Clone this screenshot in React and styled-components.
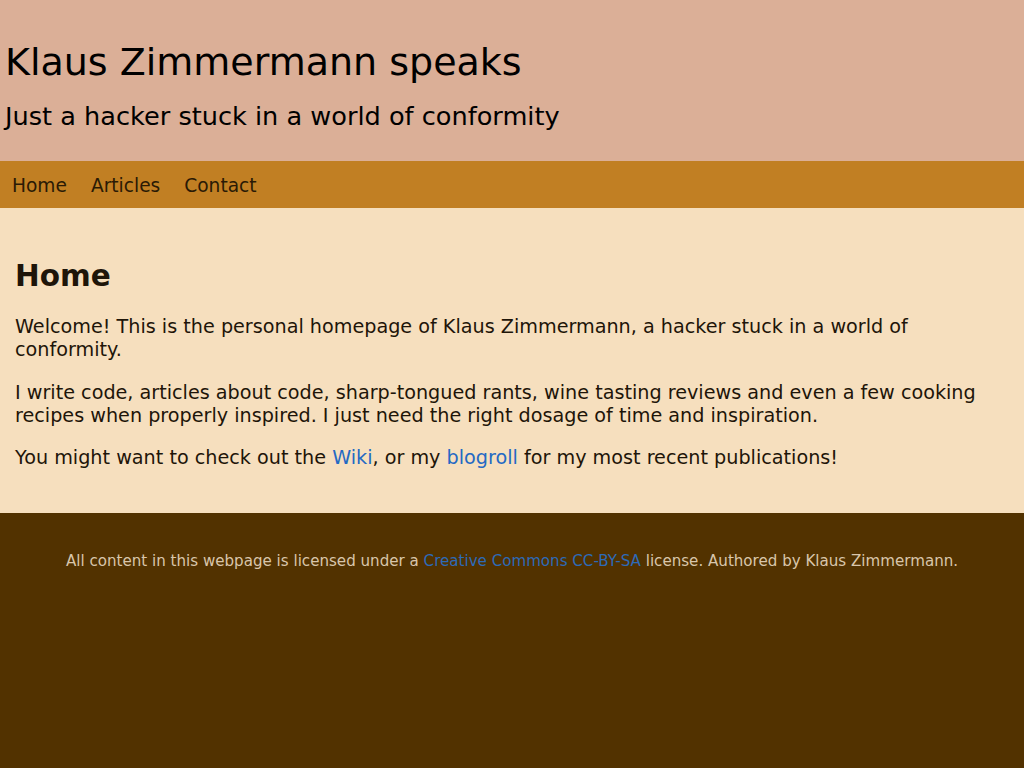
import React from "react";
import styled, { createGlobalStyle } from "styled-components";

const GlobalStyle = createGlobalStyle`
  html, body {
    margin: 0;
    padding: 0;
    background: #523200;
    font-family: "DejaVu Sans", Verdana, sans-serif;
  }
`;

const Header = styled.header`
  background: #dbaf97;
  padding: 40px 5px 30px;
  color: #000;
`;

const Title = styled.h1`
  margin: 0;
  font-size: 38px;
  line-height: 45px;
  font-weight: normal;
`;

const Subtitle = styled.p`
  margin: 16px 0 0;
  font-size: 25.6px;
  line-height: 30px;
`;

const Nav = styled.nav`
  background: #c17f23;
  height: 47px;
  box-sizing: border-box;
  padding-top: 2px;
  display: flex;
  align-items: center;
`;

const NavLink = styled.a`
  padding: 0 12px;
  font-size: 18.6px;
  color: #2a1a05;
  text-decoration: none;
`;

const Main = styled.main`
  background: #f6dfbe;
  padding: 50px 15px 44px;
  color: #1e1509;
`;

const Heading = styled.h2`
  margin: 0 0 21px;
  font-size: 29.5px;
  line-height: 36px;
  font-weight: bold;
`;

const Para = styled.p`
  margin: 0 0 19.5px;
  font-size: 19.2px;
  line-height: 23px;
  &:last-child {
    margin-bottom: 0;
  }
`;

const Link = styled.a`
  color: ${(p) => (p.$footer ? "#2d6ab8" : "#2469c4")};
  text-decoration: none;
`;

const Footer = styled.footer`
  padding: 38px 15px 36px;
  text-align: center;
  font-size: 15.1px;
  line-height: 20px;
  color: #d9c6ab;
`;

export default function App() {
  return (
    <>
      <GlobalStyle />
      <Header>
        <Title>Klaus Zimmermann speaks</Title>
        <Subtitle>Just a hacker stuck in a world of conformity</Subtitle>
      </Header>
      <Nav>
        <NavLink href="#">Home</NavLink>
        <NavLink href="#">Articles</NavLink>
        <NavLink href="#">Contact</NavLink>
      </Nav>
      <Main>
        <Heading>Home</Heading>
        <Para>
          Welcome! This is the personal homepage of Klaus Zimmermann, a hacker
          stuck in a world of conformity.
        </Para>
        <Para>
          I write code, articles about code, sharp-tongued rants, wine tasting
          reviews and even a few cooking recipes when properly inspired. I just
          need the right dosage of time and inspiration.
        </Para>
        <Para>
          You might want to check out the <Link href="#">Wiki</Link>, or my{" "}
          <Link href="#">blogroll</Link> for my most recent publications!
        </Para>
      </Main>
      <Footer>
        All content in this webpage is licensed under a{" "}
        <Link $footer href="#">Creative Commons CC-BY-SA</Link> license. Authored
        by Klaus Zimmermann.
      </Footer>
    </>
  );
}
